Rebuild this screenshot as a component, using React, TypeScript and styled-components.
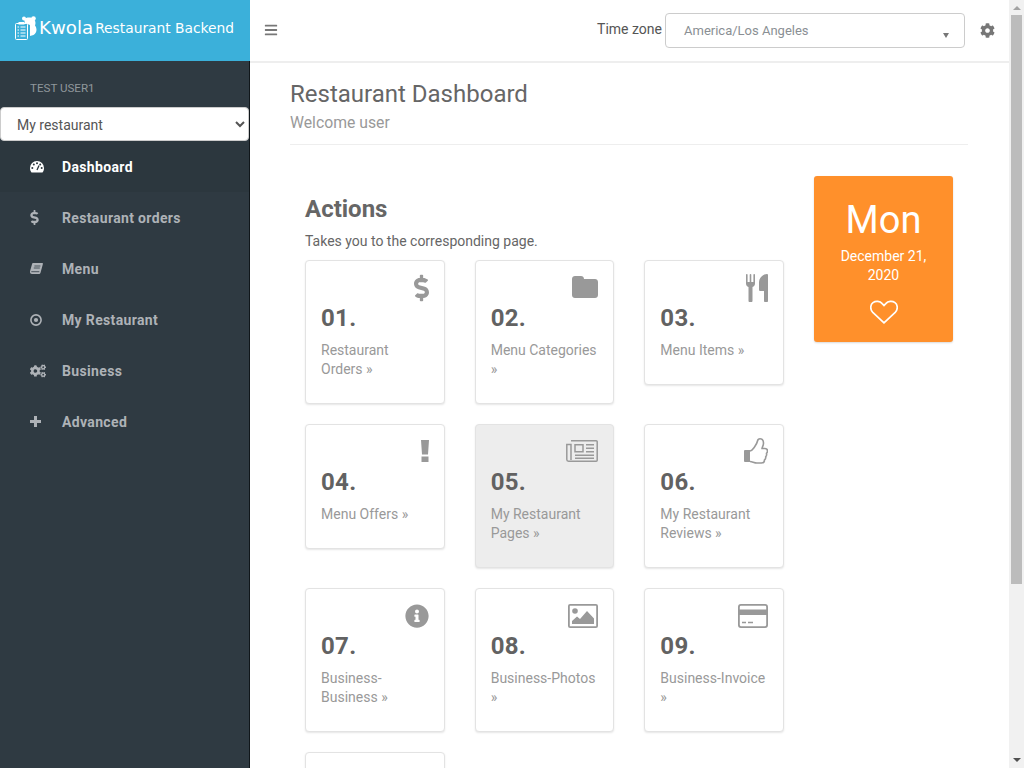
import React from "react";
import styled, { createGlobalStyle } from "styled-components";
import { FaBars, FaCog, FaCogs, FaDollarSign, FaInfoCircle, FaStar } from "react-icons/fa";

const Global = createGlobalStyle`
  html, body { margin: 0; padding: 0; background: #fff; }
  body { font-family: Roboto, "Liberation Sans", sans-serif; font-size: 14px; color: #555; }
  * { box-sizing: border-box; }
`;

const Page = styled.div`display: flex; min-height: 994px; margin-right: 15px;`;
const ScrollTrack = styled.div`
  position: fixed; top: 0; right: 0; width: 15px; height: 768px; background: #f1f1f1;
  display: flex; flex-direction: column; align-items: center; justify-content: space-between; padding: 6px 0;
`;
const ScrollThumb = styled.div`
  position: absolute; top: 15px; left: 2px; width: 11px; height: 569px; background: #bcbcbc;
`;
const ScrollArrow = styled.span<{ $down?: boolean }>`
  width: 0; height: 0; border-left: 4px solid transparent; border-right: 4px solid transparent;
  ${(p) => (p.$down ? "border-top: 4px solid #505050;" : "border-bottom: 4px solid #a3a3a3;")}
`;

const Sidebar = styled.aside`
  width: 250px; flex: none; background: #2f3a42; border-right: 1px solid #10161a;
  display: flex; flex-direction: column;
`;
const Brand = styled.div`
  height: 61px; margin-right: -1px; background: #3bb0da; color: #fff; display: flex; align-items: center;
  padding: 0 0 6px 15px; font-family: "DejaVu Sans", sans-serif;
`;
const BrandMain = styled.span`font-size: 18.2px; margin: 0 2px 0 2px;`;
const BrandSub = styled.span`font-size: 13.8px;`;
const UserName = styled.div`font-size: 11.6px; color: #8f979c; padding: 20px 0 0 30px; height: 46px;`;
const RestaurantSelect = styled.select`
  display: block; width: 249px; height: 34px; border: 1px solid #ccc; border-radius: 4px; background: #fff;
  color: #555; font: 14px Roboto, sans-serif; padding: 1px 12px 0;
`;
const Nav = styled.nav`display: flex; flex-direction: column;`;
const NavItem = styled.div<{ $active?: boolean }>`
  height: 51px; display: flex; align-items: center; padding-left: 30px;
  color: ${(p) => (p.$active ? "#fff" : "#aeb2b7")};
  background: ${(p) => (p.$active ? "#2c373e" : "transparent")};
  font-size: 14px; font-weight: 700; letter-spacing: 0.35px;
`;
const NavIcon = styled.span`width: 32px; display: flex; align-items: center;`;
const NavDollar = styled(FaDollarSign)`width: 9px; height: 15px;`;
const NavCogs = styled(FaCogs)`width: 16px; height: 14px;`;

const Main = styled.div`flex: 1; min-width: 0; display: flex; flex-direction: column;`;
const Topbar = styled.header`
  height: 63px; border-bottom: 2px solid #eee; display: flex; align-items: center; padding: 0 14px 1px 13.5px; color: #777;
`;
const Burger = styled.span`display: flex; font-size: 14px; color: #777;`;
const TopRight = styled.div`margin-left: auto; display: flex; align-items: center;`;
const ZoneLabel = styled.span`font-size: 14px; color: #555; margin-right: 3px; position: relative; top: -1px;`;
const ZoneSelect = styled.div`
  width: 300px; height: 35px; border: 1px solid #ccc; border-radius: 4px; display: flex; align-items: center;
  padding: 0 15px 0 18px; color: #8a8f94; font-size: 13px; justify-content: space-between;
`;
const Caret = styled.span`
  width: 0; height: 0; border-left: 3.5px solid transparent; border-right: 3.5px solid transparent;
  border-top: 5px solid #777; margin-top: 11px;
`;
const Gear = styled.span`display: flex; margin-left: 15px; font-size: 15px; color: #777;`;

const Content = styled.main`padding: 18px 41px 0 40px;`;
const Heading = styled.div`border-bottom: 1px solid #eee; height: 64px;`;
const Title = styled.h1`margin: 0; font-size: 24px; font-weight: 400; line-height: 26px; color: #666;`;
const Subtitle = styled.p`margin: 4px 0 0; font-size: 15.75px; line-height: 24px; color: #999;`;
const Row = styled.div`display: grid; grid-template-columns: 509px 1fr; margin-top: 31px;`;
const Actions = styled.section`padding: 17px 15px 0;`;
const ActionsTitle = styled.h2`margin: 0; font-size: 24px; line-height: 32px; font-weight: 700; color: #666;`;
const ActionsText = styled.p`margin: 6px 0 0; font-size: 14px; line-height: 20px; color: #666;`;
const CardGrid = styled.div`
  display: grid; grid-template-columns: repeat(3, 139.67px); column-gap: 30px; row-gap: 20px; align-items: start; margin-top: 9px;
`;
const Card = styled.a<{ $hover?: boolean }>`
  display: block; padding: 13px 15px 24px; border: 1px solid #e3e3e3; border-radius: 4px;
  background: ${(p) => (p.$hover ? "#ededed" : "#fff")};
  box-shadow: 0 1px 2px rgba(0,0,0,.1);
`;
const CardIcon = styled.div<{ $drop?: number }>`
  height: 31px; padding-top: ${(p) => p.$drop ?? 0}px;
  display: flex; justify-content: flex-end; align-items: flex-start; color: #999;
`;
const CardDollar = styled(FaDollarSign)`width: 15px; height: 28px;`;
const CardInfo = styled(FaInfoCircle)`width: 24px; height: 24px;`;
const CardStar = styled(FaStar)`width: 24px; height: 24px;`;
const CardNumber = styled.div`font-size: 24px; font-weight: 700; line-height: 26px; color: #626262; letter-spacing: .3px;`;
const CardText = styled.div`font-size: 14px; line-height: 19px; color: #999; margin-top: 10px;`;

const DateColumn = styled.aside`padding: 0 15px;`;
const DateCard = styled.div`
  height: 166px; background: #ff902b; border-radius: 3px; color: #fff; text-align: center; padding: 21px 15px 0;
  box-shadow: 0 1px 2px rgba(0,0,0,.15);
`;
const Day = styled.div`font-size: 38px; font-weight: 400; line-height: 46px;`;
const DateText = styled.div`font-size: 14px; line-height: 19px; margin-top: 4px;`;
const Heart = styled.div`display: flex; justify-content: center; margin-top: 15px;`;

const DashIcon = () => (
  <svg width="14" height="12" viewBox="0 0 14 12" aria-hidden="true">
    <path d="M7 0a7 7 0 0 1 7 7c0 1.800-.5 3.300-1.500 4.500h-11C.5 10.300 0 8.800 0 7a7 7 0 0 1 7-7z" fill="currentColor" />
    <g fill="#2c373e">
      <circle cx="2.300" cy="7" r="1" /><circle cx="3.800" cy="3.600" r="1" /><circle cx="7" cy="2.200" r="1" />
      <circle cx="10.200" cy="3.600" r="1" /><circle cx="11.700" cy="7" r="1" />
    </g>
    <path d="M7 9l2-4.500" stroke="#2c373e" strokeWidth="1.300" />
  </svg>
);
const BookIcon = () => (
  <svg width="13" height="12" viewBox="0 0 13 12" aria-hidden="true">
    <path d="M3 0h9.300c.5 0 .8.4.6 1l-2.300 8.500c-.3 1-1 1.500-2 1.500H2C.8 11 0 10 0 9c0-.3 0-.6.1-.9L2 1.200C2.200.5 2.500 0 3 0z" fill="currentColor" />
    <path d="M4.400 3h6M3.800 5h6M1.300 8.700h8" stroke="#2f3a42" strokeWidth=".8" fill="none" />
  </svg>
);
const DotIcon = () => (
  <svg width="12" height="12" viewBox="0 0 12 12" aria-hidden="true">
    <circle cx="6" cy="6" r="5.100" fill="none" stroke="currentColor" strokeWidth="1.600" />
    <circle cx="6" cy="6" r="2.100" fill="currentColor" />
  </svg>
);
const PlusIcon = () => (
  <svg width="11" height="11" viewBox="0 0 11 11" fill="currentColor" aria-hidden="true">
    <path d="M4 0h3v4h4v3H7v4H4V7H0V4h4z" />
  </svg>
);
const FolderIcon = () => (
  <svg width="26" height="22" viewBox="0 0 26 22" fill="#999" aria-hidden="true">
    <path d="M3 0h6c1.600 0 3 1.200 3 3h11c1.700 0 3 1.300 3 3v13c0 1.700-1.300 3-3 3H3c-1.700 0-3-1.300-3-3V3c0-1.700 1.300-3 3-3z" />
  </svg>
);
const CutleryIcon = () => (
  <svg width="22" height="28" viewBox="0 0 22 28" fill="#999" aria-hidden="true">
    <path d="M0 .8v8.700c0 2 1 3 2.500 3.500v13.500a2 2 0 0 0 4 0V13C8 12.500 9 11.500 9 9.500V.8a.8.8 0 0 0-1.600 0V8H5.300V.8a.8.8 0 0 0-1.600 0V8H1.600V.8a.8.8 0 0 0-1.600 0z" />
    <path d="M22 1v25.500a2 2 0 0 1-4 0V17h-3.500c-1 0-1.500-.5-1.500-1.500V8c0-4 4-8 8-8a1 1 0 0 1 1 1z" />
  </svg>
);
const ExclaimIcon = () => (
  <svg width="8" height="22" viewBox="0 0 8 22" fill="#999" aria-hidden="true">
    <path d="M0 0h8l-1 14.500H1zM.5 16.500h7V22h-7z" />
  </svg>
);
const NewspaperIcon = () => (
  <svg width="32" height="22" viewBox="0 0 32 22" fill="none" stroke="#999" strokeWidth="1.500" aria-hidden="true">
    <path d="M5 .8h25.200a1 1 0 0 1 1 1v18.400a1 1 0 0 1-1 1H2.500A1.700 1.700 0 0 1 .8 19.500V4.500H5V20" />
    <path d="M9 4.800h8v7H9zM20 4.800h8M20 8.300h8M20 11.800h8M9 15.300h19M9 18.300h19" />
  </svg>
);
const ThumbIcon = () => (
  <svg width="24" height="26" viewBox="0 0 24 26" aria-hidden="true">
    <path d="M0 13a1 1 0 0 1 1-1h5v12H1a1 1 0 0 1-1-1z" fill="#999" />
    <path d="M6 13c2 0 3-2 4.500-4 1.500-2 2.500-3.500 3-6 .3-1.500 1-2.200 2.500-2.200 2.500 0 3.500 2.500 3.500 4.500 0 2.500-1.500 4-1.500 5.200h3c1.500 0 2.500 1.200 2.500 2.500 0 1-.3 1.600-1 2.300.3 1.500 0 2.700-.8 3.500.2 1.500-.2 2.500-1.200 3.200 0 2-1.200 3-3.200 3H13c-3 0-4.500-1.500-7-1.500" fill="none" stroke="#999" strokeWidth="1.600" />
  </svg>
);
const ImageIcon = () => (
  <svg width="30" height="24" viewBox="0 0 30 24" aria-hidden="true">
    <rect x=".9" y=".9" width="28.200" height="22.200" rx="1.200" fill="none" stroke="#999" strokeWidth="1.800" />
    <circle cx="7" cy="7" r="2.800" fill="#999" />
    <path d="M4 20v-3l5-4.500 3 2.500 7-8 7 7.500V20z" fill="#999" />
  </svg>
);
const CreditIcon = () => (
  <svg width="30" height="24" viewBox="0 0 30 24" aria-hidden="true">
    <rect x=".9" y=".9" width="28.200" height="22.200" rx="2" fill="none" stroke="#999" strokeWidth="1.800" />
    <path d="M1 5.500h28V11H1z" fill="#999" />
    <path d="M4 18.500h4M10 18.500h5" stroke="#999" strokeWidth="1.500" />
  </svg>
);
const HeartIcon = () => (
  <svg width="28" height="24" viewBox="0 0 28 24" fill="none" stroke="#fff" strokeWidth="1.700" aria-hidden="true">
    <path d="M14 22.800L2.800 12.300C-.2 9.300.3 4.600 3 2.600c2.800-2 7-1.500 9.200 1L14 5.500l1.800-1.900c2.200-2.500 6.400-3 9.200-1 2.700 2 3.200 6.700.2 9.700z" />
  </svg>
);
const Logo = () => (
  <svg width="22" height="24" viewBox="0 0 22 24" fill="none" aria-hidden="true">
    <rect x=".5" y="7.500" width="12" height="16" rx="1" stroke="#fff" strokeWidth="1" fill="#3bb0da" />
    <rect x="3.500" y="6" width="6" height="2.500" fill="#fff" />
    <path d="M2.500 11h1.500M5.500 11h5M2.500 14h1.500M5.500 14h5M2.500 17h1.500M5.500 17h5M2.500 20h1.500M5.500 20h5" stroke="#fff" strokeWidth="1" />
    <circle cx="9" cy="2.500" r="2" fill="#fff" />
    <circle cx="18.500" cy="2.500" r="2.300" fill="#fff" />
    <path d="M9 3c2-1.800 7-2.200 9.500-.3 2.300 2 2.300 4.800 1.500 6.800 2.500 3 1.800 8-1.500 9.500l-3.500 1V9L10 7z" fill="#fff" />
  </svg>
);

const nav = [
  { icon: <DashIcon />, label: "Dashboard", active: true },
  { icon: <NavDollar />, label: "Restaurant orders" },
  { icon: <BookIcon />, label: "Menu" },
  { icon: <DotIcon />, label: "My Restaurant" },
  { icon: <NavCogs />, label: "Business" },
  { icon: <PlusIcon />, label: "Advanced" },
];
const cards = [
  { n: "01.", t: "Restaurant Orders »", i: <CardDollar />, drop: 0 },
  { n: "02.", t: "Menu Categories »", i: <FolderIcon />, drop: 2 },
  { n: "03.", t: "Menu Items »", i: <CutleryIcon />, drop: 0 },
  { n: "04.", t: "Menu Offers »", i: <ExclaimIcon />, drop: 2 },
  { n: "05.", t: "My Restaurant Pages »", i: <NewspaperIcon />, drop: 2, hover: true },
  { n: "06.", t: "My Restaurant Reviews »", i: <ThumbIcon />, drop: 0 },
  { n: "07.", t: "Business-Business »", i: <CardInfo />, drop: 2 },
  { n: "08.", t: "Business-Photos »", i: <ImageIcon />, drop: 2 },
  { n: "09.", t: "Business-Invoice »", i: <CreditIcon />, drop: 2 },
  { n: "10.", t: "Advanced »", i: <CardStar />, drop: 4 },
];

export default function App() {
  return (
    <Page>
      <Global />
      <Sidebar>
        <Brand>
          <Logo />
          <BrandMain>Kwola</BrandMain>
          <BrandSub>Restaurant Backend</BrandSub>
        </Brand>
        <UserName>TEST USER1</UserName>
        <RestaurantSelect defaultValue="My restaurant">
          <option>My restaurant</option>
        </RestaurantSelect>
        <Nav>
          {nav.map((n) => (
            <NavItem key={n.label} $active={n.active}>
              <NavIcon>{n.icon}</NavIcon>
              {n.label}
            </NavItem>
          ))}
        </Nav>
      </Sidebar>
      <Main>
        <Topbar>
          <Burger><FaBars /></Burger>
          <TopRight>
            <ZoneLabel>Time zone</ZoneLabel>
            <ZoneSelect>America/Los Angeles<Caret /></ZoneSelect>
            <Gear><FaCog /></Gear>
          </TopRight>
        </Topbar>
        <Content>
          <Heading>
            <Title>Restaurant Dashboard</Title>
            <Subtitle>Welcome user</Subtitle>
          </Heading>
          <Row>
            <Actions>
              <ActionsTitle>Actions</ActionsTitle>
              <ActionsText>Takes you to the corresponding page.</ActionsText>
              <CardGrid>
                {cards.map((c) => (
                  <Card key={c.n} $hover={c.hover}>
                    <CardIcon $drop={c.drop}>{c.i}</CardIcon>
                    <CardNumber>{c.n}</CardNumber>
                    <CardText>{c.t}</CardText>
                  </Card>
                ))}
              </CardGrid>
            </Actions>
            <DateColumn>
              <DateCard>
                <Day>Mon</Day>
                <DateText>December 21, 2020</DateText>
                <Heart><HeartIcon /></Heart>
              </DateCard>
            </DateColumn>
          </Row>
        </Content>
      </Main>
      <ScrollTrack>
        <ScrollArrow />
        <ScrollThumb />
        <ScrollArrow $down />
      </ScrollTrack>
    </Page>
  );
}
